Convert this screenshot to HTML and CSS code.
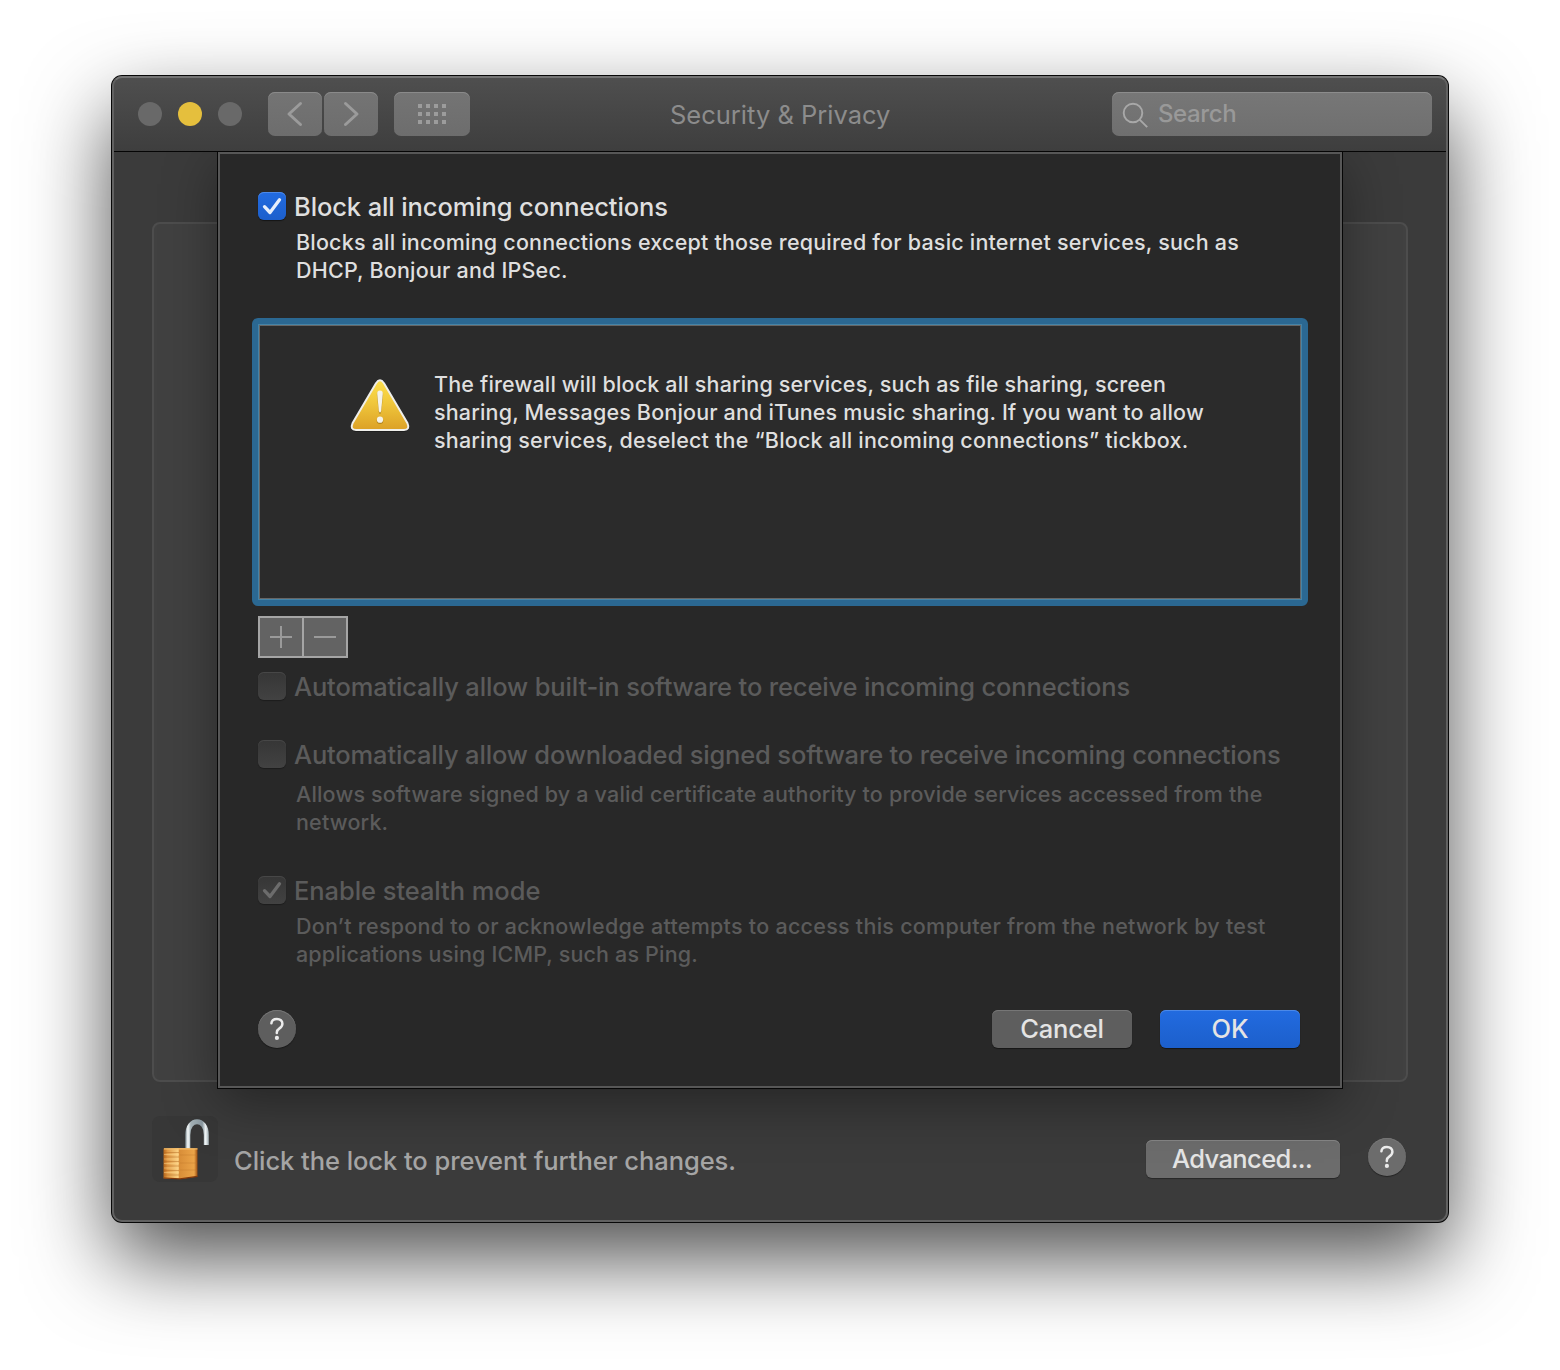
FILE: index.html
```html
<!DOCTYPE html>
<html lang="en-GB">
<head>
<meta charset="utf-8">
<title>Security &amp; Privacy</title>
<link rel="stylesheet" href="styles.css">
</head>
<body>
<main class="window">
  <header class="titlebar">
    <div class="lights"><i class="light"></i><i class="light minimise"></i><i class="light"></i></div>
    <div class="nav">
      <button class="tool"><svg width="54" height="44" viewBox="0 0 54 44"><path d="M32.500 11.500 21 22 32.500 32.500"/></svg></button>
      <button class="tool"><svg width="54" height="44" viewBox="0 0 54 44"><path d="M21.500 11.500 33 22 21.500 32.500"/></svg></button>
    </div>
    <button class="tool grid"><svg width="28" height="20" viewBox="0 0 28 20"><path class="dots" d="M0 0h4v4H0zM8 0h4v4H8zM16 0h4v4h-4zM24 0h4v4h-4zM0 8h4v4H0zM8 8h4v4H8zM16 8h4v4h-4zM24 8h4v4h-4zM0 16h4v4H0zM8 16h4v4H8zM16 16h4v4h-4zM24 16h4v4h-4z"/></svg></button>
    <h1 class="title">Security &amp; Privacy</h1>
    <div class="search">
      <svg width="28" height="28" viewBox="0 0 28 28"><circle cx="11" cy="11" r="9.3"/><path d="m17.600 17.600 7.600 7.600"/></svg>
      <span>Search</span>
    </div>
  </header>

  <section class="pane">
    <div class="group"></div>
    <footer class="bottom">
      <div class="lock">
        <svg width="66" height="66" viewBox="0 0 66 66">
          <defs>
            <linearGradient id="front" x1="0" x2="1" y1="0" y2="0"><stop offset="0" stop-color="#b9681c"/><stop offset=".12" stop-color="#e09a45"/><stop offset=".43" stop-color="#fbd183"/><stop offset=".47" stop-color="#d98e38"/><stop offset=".9" stop-color="#eba448"/><stop offset="1" stop-color="#9c4f12"/></linearGradient>
            <linearGradient id="steel" x1="33" x2="57" y1="0" y2="0" gradientUnits="userSpaceOnUse"><stop offset="0" stop-color="#718087"/><stop offset=".12" stop-color="#f8fcfd"/><stop offset=".24" stop-color="#a5b3b8"/><stop offset=".72" stop-color="#8b9aa2"/><stop offset=".86" stop-color="#f5fafb"/><stop offset="1" stop-color="#9ba9af"/></linearGradient>
          </defs>
          <path d="M35.800 33V19C35.800 1.300 54.300 1.300 54.300 19V29" fill="none" stroke="url(#steel)" stroke-width="5"/>
          <path d="M11.500 32.500 28 32 45.500 32.500V60.500L28 63 11.500 62.500Z" fill="url(#front)"/>
          <path d="M12 32.800H45.500" stroke="#f5bd68" stroke-width="1.200"/>
          <path d="M12 36.500H27M12 41H27M12 45.500H27M12 50H27M12 54.500H27M12 59H27" stroke="#b0651f" stroke-width="1.200" opacity=".45"/>
          <path d="M12 38.500H27M12 43H27M12 47.500H27M12 52H27M12 56.500H27" stroke="#ffd98f" stroke-width="1.200" opacity=".45"/>
          <path d="M28 39H45M28 47H45M28 54H45" stroke="#bd7428" stroke-width="1" opacity=".35"/>
          <path d="M12 62 28 62.800 45.500 60.300" fill="none" stroke="#81370b" stroke-width="1.200"/>
        </svg>
      </div>
      <span class="lock-text">Click the lock to prevent further changes.</span>
      <button class="btn advanced">Advanced...</button>
      <button class="help light-help"><svg width="38" height="38" viewBox="0 0 38 38"><path d="M13.400 13.300C13.600 10.600 15.800 8.900 18.900 8.900 22.200 8.900 24.400 10.900 24.400 13.800 24.400 16 23.300 17.200 21.500 18.400 19.600 19.700 18.800 20.700 18.800 22.500V23"/><circle cx="18.900" cy="27.900" r="2.100"/></svg></button>
    </footer>
  </section>

  <section class="sheet">
    <label class="option"><i class="check on"><svg width="28" height="28" viewBox="0 0 28 28"><path d="M6.500 14.700 12 20.500 21.500 7.800"/></svg></i><span>Block all incoming connections</span></label>
    <p class="note note-block">Blocks all incoming connections except those required for basic internet services, such as<br>DHCP, Bonjour and IPSec.</p>

    <div class="list">
      <svg class="warning" width="62" height="58" viewBox="0 0 62 58">
        <defs><linearGradient id="amber" x1="0" x2="0" y1="0" y2="1"><stop offset="0" stop-color="#fddf4c"/><stop offset=".45" stop-color="#f0c73c"/><stop offset="1" stop-color="#dca126"/></linearGradient></defs>
        <path d="M26.900 5Q31 -.400 35.100 5L58.500 46.500Q61.500 53.600 55 54H7Q.500 53.600 3.500 46.500Z" fill="#151515" opacity=".6"/>
        <path d="M27 5.200Q31 -.600 35 5.200L58.500 45.300Q61.300 51.600 55 52H7Q.700 51.600 3.500 45.300Z" fill="url(#amber)" stroke="#efefeb" stroke-width="2"/>
        <path d="M31 13.500C33.300 13.500 34.300 14.800 34.100 17L32.300 33.500Q31.900 36 31 36T29.700 33.500L27.900 17C27.700 14.800 28.700 13.500 31 13.500Z" fill="#9c7418" opacity=".65"/>
        <path d="M31 12.500C33.200 12.500 34 13.800 33.800 16L32.200 32.500Q31.900 34.500 31 34.500T29.800 32.500L28.200 16C28 13.800 28.800 12.500 31 12.500Z" fill="#f5f3e9"/>
        <circle cx="31" cy="42.800" r="3.300" fill="#9c7418" opacity=".7"/><circle cx="31" cy="41.700" r="3.100" fill="#f5f3e9"/>
      </svg>
      <p class="message"><span class="tight">The firewall will block all sharing services, such as file sharing, screen</span><br><span class="tight">sharing, Messages Bonjour and iTunes music sharing. If you want to allow</span><br>sharing services, deselect the “Block all incoming connections” tickbox.</p>
    </div>

    <div class="stepper">
      <button><svg width="42" height="38" viewBox="0 0 42 38"><path d="M10 19H32M21 8V30"/></svg></button>
      <button><svg width="42" height="38" viewBox="0 0 42 38"><path d="M10 19H32"/></svg></button>
    </div>

    <label class="option off builtin"><i class="check"></i><span>Automatically allow built-in software to receive incoming connections</span></label>
    <label class="option off signed"><i class="check"></i><span>Automatically allow downloaded signed software to receive incoming connections</span></label>
    <p class="note off note-signed">Allows software signed by a valid certificate authority to provide services accessed from the<br>network.</p>
    <label class="option off stealth"><i class="check"><svg width="28" height="28" viewBox="0 0 28 28"><path d="M6.500 14.700 12 20.500 21.500 7.800"/></svg></i><span>Enable stealth mode</span></label>
    <p class="note off note-stealth"><span class="wide">Don’t respond to or acknowledge attempts to access this computer from the network by test</span><br><span class="tight">applications using ICMP, such as Ping.</span></p>

    <div class="actions">
      <button class="help"><svg width="38" height="38" viewBox="0 0 38 38"><path d="M13.400 13.300C13.600 10.600 15.800 8.900 18.900 8.900 22.200 8.900 24.400 10.900 24.400 13.800 24.400 16 23.300 17.200 21.500 18.400 19.600 19.700 18.800 20.700 18.800 22.500V23"/><circle cx="18.900" cy="27.900" r="2.100"/></svg></button>
      <button class="btn cancel">Cancel</button>
      <button class="btn primary">OK</button>
    </div>
  </section>
</main>
</body>
</html>
```
FILE: styles.css
```css
* { box-sizing: border-box; }

body {
  margin: 0;
  width: 1560px;
  height: 1370px;
  overflow: hidden;
  background: #fff;
  color: #dfdfdf;
  font-family: Inter, "Liberation Sans", sans-serif;
  font-size: 25.5px;
  font-weight: 450;
  line-height: 32px;
  white-space: nowrap;
}

button {
  margin: 0;
  padding: 0;
  border: 0;
  font: inherit;
  color: inherit;
}

svg { display: block; }

.window {
  position: relative;
  width: 1336px;
  height: 1146px;
  margin: 76px 0 0 112px;
  border-radius: 10px;
  background: #3b3b3b;
  box-shadow: 0 0 0 1px #080808, 0 36px 84px 0 rgba(0, 0, 0, .7);
  display: flex;
  flex-direction: column;
}

/* light hairline just inside the window edge */
.window::after {
  content: "";
  position: absolute;
  inset: 0;
  border: 2px solid #616161;
  border-top-color: #747474;
  border-radius: 10px;
  pointer-events: none;
}

.titlebar {
  height: 76px;
  flex: none;
  display: flex;
  align-items: center;
  padding: 0 16px 0 26px;
  border-bottom: 1px solid #050505;
  border-radius: 10px 10px 0 0;
  background: linear-gradient(#4f4f4f, #3e3e3e);
}

.lights { display: flex; gap: 16px; }

.light {
  width: 24px;
  height: 24px;
  border-radius: 50%;
  background: #696969;
}

.light.minimise { background: #e5bf3d; }

.nav { display: flex; gap: 2px; margin-left: 26px; }

.tool {
  width: 54px;
  height: 44px;
  border-radius: 7px;
  background: linear-gradient(#747474, #6d6d6d);
  box-shadow: inset 0 1px 0 #8a8a8a;
}

.tool path { fill: none; stroke: #9b9b9b; stroke-width: 3; stroke-linecap: round; stroke-linejoin: round; }
.tool .dots { fill: #9c9c9c; stroke: none; }
.grid { width: 76px; margin-left: 16px; display: grid; place-items: center; }

.title {
  flex: 1;
  margin: 0;
  padding: 2px 0 0 200px;
  font: inherit;
  font-weight: 400;
  color: #8c8c8c;
}

.search {
  width: 320px;
  height: 44px;
  display: flex;
  align-items: center;
  padding-left: 10px;
  gap: 8px;
  border-radius: 7px;
  background: linear-gradient(#777, #6f6f6f);
  box-shadow: inset 0 1px 0 #8c8c8c;
  color: #999;
  font-size: 24px;
  letter-spacing: -.4px;
}

.search svg { fill: none; stroke: #a8a8a8; stroke-width: 1.9; margin-top: 4px; }

.pane { flex: 1; padding: 70px 40px 0; }

.group {
  height: 860px;
  border: 2px solid #4d4d4d;
  border-radius: 8px;
  background: #414141;
}

.bottom { display: flex; align-items: flex-start; padding: 34px 2px 0 0; color: #a5a5a5; }

.lock { width: 66px; height: 66px; border-radius: 8px; background: #373737; }
.lock-text { margin: 29px auto 0 16px; letter-spacing: -.05px; }

.btn {
  width: 140px;
  height: 38px;
  border-radius: 6px;
  background: #5e5e5e;
  box-shadow: inset 0 1px 0 #767676, 0 1px 1px rgba(0, 0, 0, .45);
  color: #e4e4e4;
  letter-spacing: -.15px;
}

.advanced { width: 194px; margin: 24px 28px 0 0; padding-right: 2px; background: #6c6c6c; box-shadow: inset 0 1px 0 #858585, 0 1px 1px rgba(0, 0, 0, .35); letter-spacing: -.6px; }

.help {
  width: 38px;
  height: 38px;
  border-radius: 50%;
  background: #5e5e5e;
  box-shadow: inset 0 1px 0 #767676, 0 1px 1px rgba(0, 0, 0, .4);
}

.light-help { margin-top: 22px; background: #6c6c6c; }
.help path { fill: none; stroke: #ececec; stroke-width: 2.5; stroke-linecap: round; }
.help circle { fill: #ececec; }

.sheet {
  position: absolute;
  left: 106px;
  top: 76px;
  width: 1124px;
  height: 936px;
  border: 2px solid #575757;
  padding: 37px 38px 0;
  background: #282828;
  box-shadow: 0 0 0 1px #060606, 0 14px 50px rgba(0, 0, 0, .38);
  clip-path: inset(0 -100px -100px -100px);
  z-index: 1;
}

.option { display: flex; gap: 8px; height: 32px; letter-spacing: -.12px; }

.check {
  width: 28px;
  height: 28px;
  flex: none;
  margin-top: 1px;
  border-radius: 6px;
  background: linear-gradient(#363636, #424242);
  box-shadow: inset 0 1px 0 #474747, 0 1px 1px rgba(0, 0, 0, .3);
}

.check.on { background: linear-gradient(#226be0, #1c5fcc); box-shadow: inset 0 1px 0 #4c89e8, 0 1px 1px rgba(0, 0, 0, .5); }
.check path { fill: none; stroke: #6c6c6c; stroke-width: 3.3; stroke-linecap: round; stroke-linejoin: round; }
.check.on path { stroke: #e7effb; }

.off { color: #5b5b5b; }

.note, .message { margin: 0; font-size: 21.5px; line-height: 28px; letter-spacing: .2px; }
.note { padding-left: 38px; }
.note-block { margin-top: 5px; }
.tight { letter-spacing: .165px; }
.wide { letter-spacing: .265px; }

/* focus ring around the application list */
.list {
  height: 288px;
  margin: 34px -6px 0;
  display: flex;
  padding: 45px 0 0 91px;
  border: 6px solid #2b6892;
  border-radius: 6px;
  background: #2b2b2b;
  background-clip: padding-box;
  box-shadow: inset 0 0 0 1px #4583a6, inset 0 0 0 2px #666;
}

.warning { margin-top: 9px; }
.message { margin: 1px 0 0 23px; }

.stepper {
  width: 90px;
  height: 42px;
  margin-top: 10px;
  display: flex;
  gap: 2px;
  padding: 2px;
  background: #a5a5a5;
}

.stepper button { width: 42px; height: 38px; background: #636363; }
.stepper path { stroke: #9a9a9a; stroke-width: 2; }

.builtin { margin-top: 13px; letter-spacing: -.15px; }
.signed { margin-top: 36px; letter-spacing: -.165px; }
.note-signed { margin-top: 9px; letter-spacing: .18px; }
.stealth { margin-top: 39px; letter-spacing: -.06px; }
.note-stealth { margin-top: 5px; }

.actions { display: flex; margin-top: 42px; padding-right: 2px; }
.cancel { margin-left: auto; }
.primary { margin-left: 28px; background: linear-gradient(#226be0, #1c5fcb); box-shadow: inset 0 1px 0 #4c89e8, 0 1px 1px rgba(0, 0, 0, .5); }
```
